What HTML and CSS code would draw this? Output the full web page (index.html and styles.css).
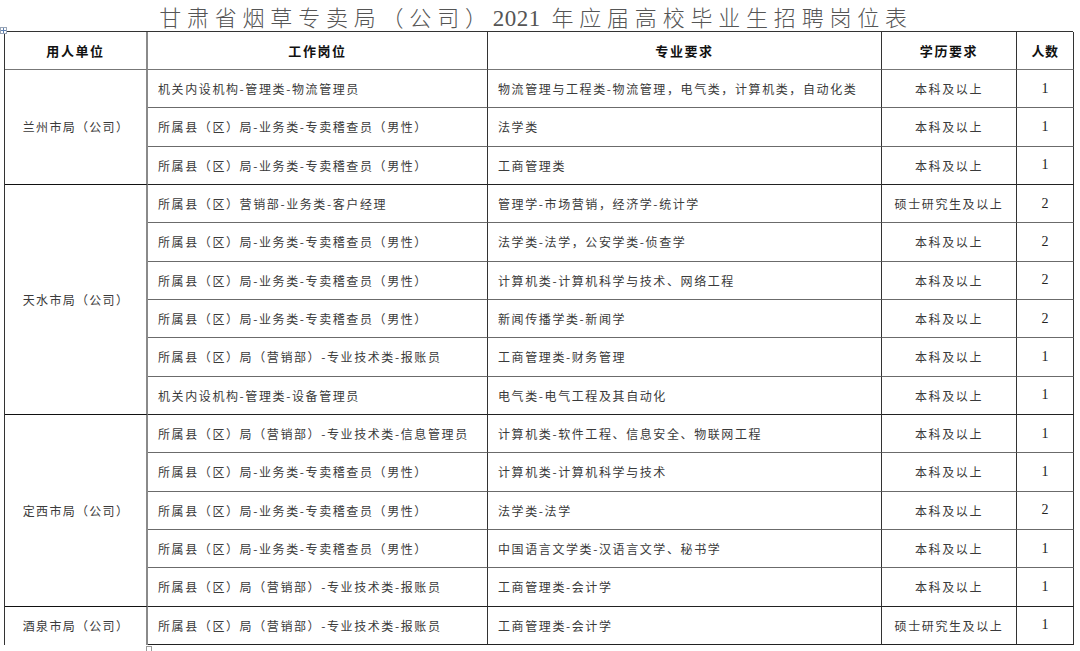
FILE: index.html
```html
<!DOCTYPE html>
<html lang="zh-CN">
<head>
<meta charset="utf-8">
<title>甘肃省烟草专卖局（公司）2021年应届高校毕业生招聘岗位表</title>
<link rel="stylesheet" href="styles.css">
</head>
<body>
<div class="page">
  <h1 class="title">甘肃省烟草专卖局（公司）<span class="num">2021</span> 年应届高校毕业生招聘岗位表</h1>
  <span class="handle"></span>
  <div class="grid">
    <div class="c h c1">用人单位</div>
    <div class="c h c2">工作岗位</div>
    <div class="c h c3">专业要求</div>
    <div class="c h c4">学历要求</div>
    <div class="c h c5">人数</div>

    <div class="c unit span3">兰州市局（公司）</div>
    <div class="c t">机关内设机构-管理类-物流管理员</div>
    <div class="c t">物流管理与工程类-物流管理，电气类，计算机类，自动化类</div>
    <div class="c m">本科及以上</div>
    <div class="c n">1</div>

    <div class="c t">所属县（区）局-业务类-专卖稽查员（男性）</div>
    <div class="c t">法学类</div>
    <div class="c m">本科及以上</div>
    <div class="c n">1</div>

    <div class="c t gb">所属县（区）局-业务类-专卖稽查员（男性）</div>
    <div class="c t gb">工商管理类</div>
    <div class="c m gb">本科及以上</div>
    <div class="c n gb">1</div>

    <div class="c unit span6">天水市局（公司）</div>
    <div class="c t">所属县（区）营销部-业务类-客户经理</div>
    <div class="c t">管理学-市场营销，经济学-统计学</div>
    <div class="c m">硕士研究生及以上</div>
    <div class="c n">2</div>

    <div class="c t">所属县（区）局-业务类-专卖稽查员（男性）</div>
    <div class="c t">法学类-法学，公安学类-侦查学</div>
    <div class="c m">本科及以上</div>
    <div class="c n">2</div>

    <div class="c t">所属县（区）局-业务类-专卖稽查员（男性）</div>
    <div class="c t">计算机类-计算机科学与技术、网络工程</div>
    <div class="c m">本科及以上</div>
    <div class="c n">2</div>

    <div class="c t">所属县（区）局-业务类-专卖稽查员（男性）</div>
    <div class="c t">新闻传播学类-新闻学</div>
    <div class="c m">本科及以上</div>
    <div class="c n">2</div>

    <div class="c t">所属县（区）局（营销部）-专业技术类-报账员</div>
    <div class="c t">工商管理类-财务管理</div>
    <div class="c m">本科及以上</div>
    <div class="c n">1</div>

    <div class="c t gb">机关内设机构-管理类-设备管理员</div>
    <div class="c t gb">电气类-电气工程及其自动化</div>
    <div class="c m gb">本科及以上</div>
    <div class="c n gb">1</div>

    <div class="c unit span5">定西市局（公司）</div>
    <div class="c t">所属县（区）局（营销部）-专业技术类-信息管理员</div>
    <div class="c t">计算机类-软件工程、信息安全、物联网工程</div>
    <div class="c m">本科及以上</div>
    <div class="c n">1</div>

    <div class="c t">所属县（区）局-业务类-专卖稽查员（男性）</div>
    <div class="c t">计算机类-计算机科学与技术</div>
    <div class="c m">本科及以上</div>
    <div class="c n">1</div>

    <div class="c t">所属县（区）局-业务类-专卖稽查员（男性）</div>
    <div class="c t">法学类-法学</div>
    <div class="c m">本科及以上</div>
    <div class="c n">2</div>

    <div class="c t">所属县（区）局-业务类-专卖稽查员（男性）</div>
    <div class="c t">中国语言文学类-汉语言文学、秘书学</div>
    <div class="c m">本科及以上</div>
    <div class="c n">1</div>

    <div class="c t gb">所属县（区）局（营销部）-专业技术类-报账员</div>
    <div class="c t gb">工商管理类-会计学</div>
    <div class="c m gb">本科及以上</div>
    <div class="c n gb">1</div>

    <div class="c unit last">酒泉市局（公司）</div>
    <div class="c t gb">所属县（区）局（营销部）-专业技术类-报账员</div>
    <div class="c t gb">工商管理类-会计学</div>
    <div class="c m gb">硕士研究生及以上</div>
    <div class="c n gb">1</div>
  </div>
  <span class="endmark"></span>
</div>
</body>
</html>
```

FILE: styles.css
```css
html, body {
  margin: 0;
  padding: 0;
  background: #ffffff;
}

.page {
  position: relative;
  width: 1080px;
  height: 651px;
  overflow: hidden;
  font-family: "Noto Sans CJK SC", "Noto Sans", sans-serif;
}

.title {
  margin: 0;
  height: 31px;
  line-height: 32px;
  font-size: 22px;
  font-weight: 300;
  color: #555555;
  text-align: center;
  letter-spacing: 5.8px;
  padding-right: 8px;
  box-sizing: border-box;
  white-space: nowrap;
}

.title .num {
  font-family: "Liberation Serif", serif;
  font-weight: 400;
  letter-spacing: 0.5px;
  font-size: 23px;
}

.handle {
  position: absolute;
  left: 0;
  top: 27px;
  width: 5px;
  height: 5px;
  border: 1px solid #9aa6b8;
  background: #ffffff;
}

.handle::before {
  content: "";
  position: absolute;
  left: 2px;
  top: 0;
  width: 1px;
  height: 5px;
  background: #5d7fb0;
}

.handle::after {
  content: "";
  position: absolute;
  left: 0;
  top: 2px;
  width: 5px;
  height: 1px;
  background: #5d7fb0;
}

.endmark {
  position: absolute;
  left: 146px;
  top: 646px;
  width: 4px;
  height: 4px;
  border: 1px solid #999999;
}

.grid {
  margin-left: 4px;
  width: 1069px;
  display: grid;
  grid-template-columns: 143px 340px 394px 135px 57px;
  grid-template-rows: 38px repeat(15, 38.33px);
  border-top: 1px solid #333333;
  border-left: 1px solid #333333;
  box-sizing: border-box;
}

.c {
  box-sizing: border-box;
  border-right: 1px solid #333333;
  border-bottom: 1px solid #6b6b6b;
  display: flex;
  align-items: center;
  font-size: 12px;
  color: #3a3a3a;
  letter-spacing: 1.6px;
  white-space: nowrap;
  overflow: hidden;
}

.h {
  justify-content: center;
  font-weight: 700;
  font-size: 13px;
  color: #111111;
  letter-spacing: 1.6px;
  border-bottom: 1px solid #777777;
}

.c1 {
  border-right: 2px solid #8a8a8a;
}

.h.c5 {
  letter-spacing: 0.5px;
}

.unit {
  justify-content: center;
  border-right: 2px solid #8a8a8a;
  border-bottom: 1px solid #111111;
  letter-spacing: 1.3px;
  padding-left: 1px;
}

.span3 { grid-row: span 3; }
.span6 { grid-row: span 6; }
.span5 { grid-row: span 5; }

.unit.last {
  border-bottom: none;
}

.t {
  padding-left: 10px;
  justify-content: flex-start;
}

.m {
  justify-content: center;
  letter-spacing: 1.6px;
}

.n {
  justify-content: center;
  font-family: "Liberation Serif", serif;
  font-size: 14px;
  color: #222222;
  letter-spacing: 0;
}

.gb {
  border-bottom: 1px solid #222222;
}
```
